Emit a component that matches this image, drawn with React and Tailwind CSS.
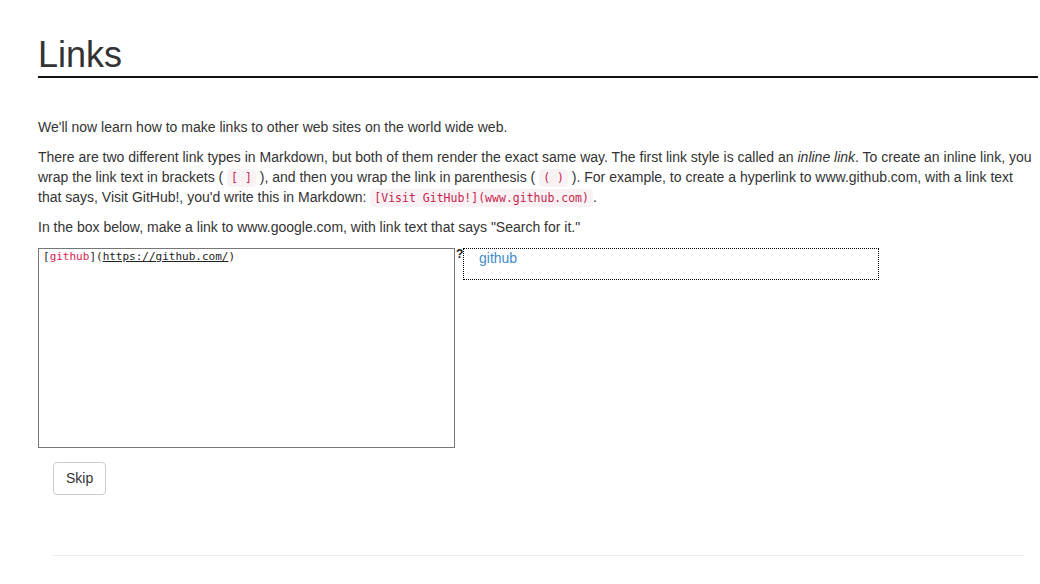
import React from "react";

function Code({ children }) {
  return (
    <code className="rounded-[4px] bg-[#f9f2f4] px-[4px] py-[2px] text-[11.5px] leading-none text-[#c7254e] [font-family:'DejaVu_Sans_Mono',monospace]">
      {children}
    </code>
  );
}

export default function App() {
  return (
    <div className="min-h-[584px] bg-white text-[#333] [font-family:'Liberation_Sans',Arial,sans-serif]">
      <div className="ml-[38px] w-[1000px] pt-[35px]">
        <h1 className="border-b-2 border-[#111] pb-[1px] text-[36px] font-medium leading-[40px]">
          Links
        </h1>
        <p className="mt-[39px] mb-[10px] text-[14px] leading-[20px]">
          We'll now learn how to make links to other web sites on the world wide web.
        </p>
        <p className="mb-[10px] text-[14px] leading-[20px]">
          There are two different link types in Markdown, but both of them render the exact same way. The first link style
          is called an <em>inline link</em>. To create an inline link, you wrap the link text in brackets ( <Code>[ ]</Code> ),
          and then you wrap the link in parenthesis ( <Code>( )</Code> ). For example, to create a hyperlink to
          www.github.com, with a link text that says, Visit GitHub!, you'd write this in Markdown:{" "}
          <Code>[Visit GitHub!](www.github.com)</Code>.
        </p>
        <p className="mb-[11px] text-[14px] leading-[20px]">
          In the box below, make a link to www.google.com, with link text that says "Search for it."
        </p>
        <div className="flex items-start">
          <div className="h-[200px] w-[417px] border border-[#767676] px-[4px] pt-[1px] text-[11px] leading-[14px] text-[#222] [font-family:'DejaVu_Sans_Mono',monospace]">
            <span>[</span>
            <span className="text-[#d81b4f]">github</span>
            <span>](</span>
            <span className="underline">https://github.com/</span>
            <span>)</span>
          </div>
          <span className="w-[8px] pl-[1px] text-[12px] font-bold leading-[13px] text-[#222]">?</span>
          <div className="h-[32px] w-[416px] border border-dotted border-black pl-[15px] text-[14px] leading-[18px]">
            <a className="text-[#428bca]">github</a>
          </div>
        </div>
        <button className="ml-[15px] mt-[14px] rounded-[4px] border border-[#ccc] bg-white px-[12px] py-[6px] text-[14px] leading-[19px] text-[#333]">
          Skip
        </button>
        <div className="ml-[15px] mt-[60px] w-[971px] border-t border-[#eee]"></div>
      </div>
    </div>
  );
}
